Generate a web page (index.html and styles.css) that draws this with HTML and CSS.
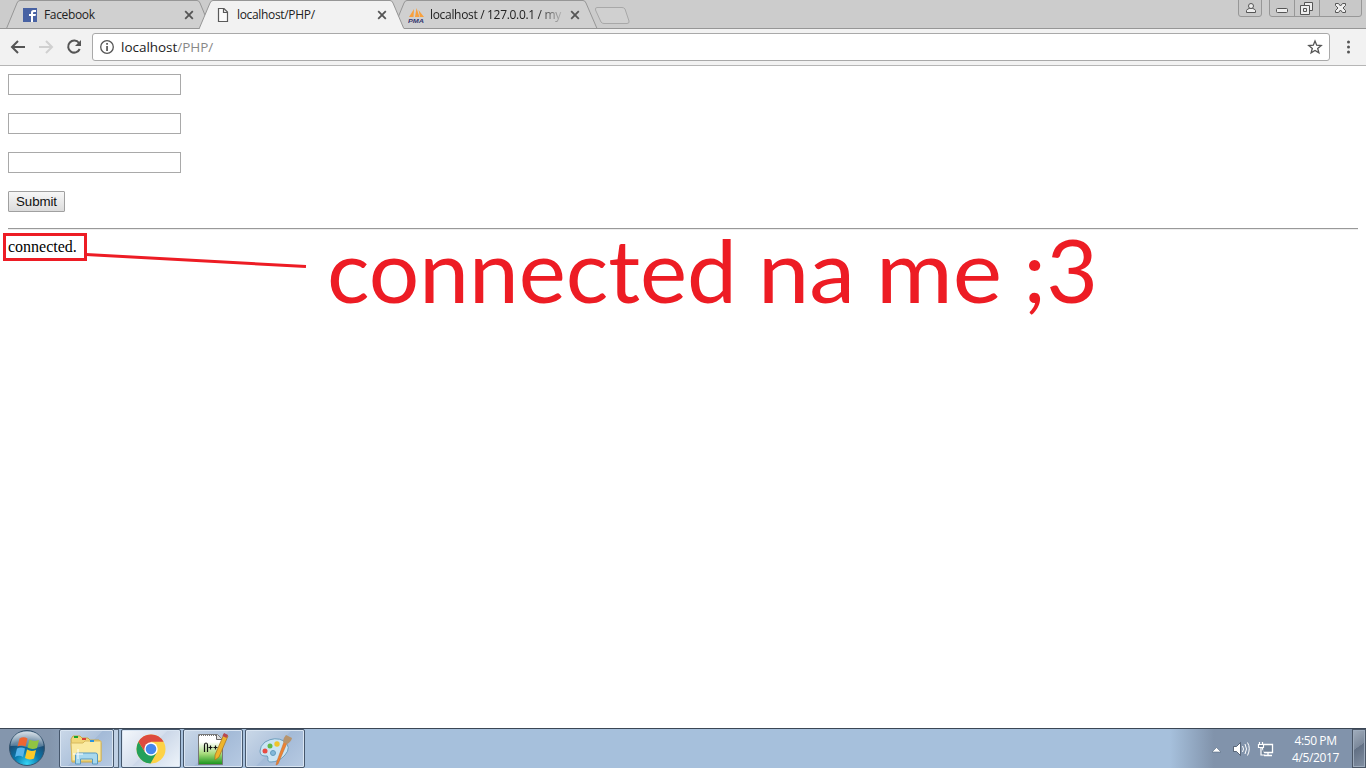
FILE: index.html
```html
<!DOCTYPE html>
<html lang="en">
<head>
<meta charset="utf-8">
<title>localhost/PHP/</title>
<link rel="stylesheet" href="styles.css">
</head>
<body>
<div class="desktop">
  <header class="tabstrip">
    <svg class="tab-shapes" width="1366" height="29" viewBox="0 0 1366 29">
      <g stroke="#969696" fill="#d0d0d0">
        <path d="M6.500 28.500L17 3Q18 .5 20 .5H197Q199 .5 200 3L210.500 28.500"/>
        <path d="M393.500 28.500L404 3Q405 .5 407 .5H583Q585 .5 586 3L597 28.500"/>
        <path d="M0 28.500H1366"/>
        <path d="M199 29L210 3Q211 .5 213 .5H390Q392 .5 393 3L404 29" fill="#f2f2f2"/>
        <path d="M597 7.500H622Q624 7.500 625 9L629 21Q629.500 23.500 627 23.500H604Q602 23.500 601 22L595.500 10Q595 7.500 597 7.500Z" stroke="#a8a8a8"/>
      </g>
      <path d="M200 28.500H403.500" stroke="#f2f2f2"/>
    </svg>
    <div class="tab tab-first">
      <svg class="favicon" width="16" height="16" viewBox="0 0 16 16"><path d="M1 1h14v14H1z" fill="#4862a3"/><path d="M9 15V9H7V7h2V5.500Q9 3 11.500 3H14v2h-2q-1 0-1 1v1h3l-.5 2H11v6z" fill="#fff"/></svg>
      <span class="tab-title title-a">Facebook</span>
      <svg class="close" width="10" height="10" viewBox="0 0 10 10"><path d="M1.200 1.200l7.600 7.600M8.800 1.200L1.200 8.800"/></svg>
    </div>
    <div class="tab tab-second">
      <svg class="favicon" width="16" height="16" viewBox="0 0 16 16"><path d="M2.500 1.500H8L11.500 5v9.500h-9zM7.500 1.500v4h4" fill="#fafafa" stroke="#5a5a5a" stroke-width="1.200"/></svg>
      <span class="tab-title title-b">localhost/PHP/</span>
      <svg class="close" width="10" height="10" viewBox="0 0 10 10"><path d="M1.200 1.200l7.600 7.600M8.800 1.200L1.200 8.800"/></svg>
    </div>
    <div class="tab tab-third">
      <svg class="favicon" width="16" height="16" viewBox="0 0 16 16"><path d="M1 10L6 2l-.5 8zM7 10L8.500 1l3 9zM12 10l-1.500-7L16 10z" fill="#f8a03c"/><text x="0" y="15.500" class="pma" textLength="16" lengthAdjust="spacingAndGlyphs">PMA</text></svg>
      <span class="tab-title title-c">localhost / 127.0.0.1 / my</span>
      <svg class="close" width="10" height="10" viewBox="0 0 10 10"><path d="M1.200 1.200l7.600 7.600M8.800 1.200L1.200 8.800"/></svg>
    </div>
    <svg class="window-buttons" width="130" height="18" viewBox="0 0 130 18">
      <g fill="#c8c8c8" stroke="#979797">
        <path d="M2.500 0V14Q2.500 16.500 5 16.500H23Q25.500 16.500 25.500 14V0"/>
        <path d="M33.500 0V14Q33.500 16.500 36 16.500H123Q125.500 16.500 125.500 14V0M58.500 0V16M83.500 0V16"/>
      </g>
      <g fill="#eee" stroke="#555" stroke-width="1">
        <path d="M10.500 12.500v-2q1-2 3-2h3q2 0 3 2v2z"/><circle cx="15" cy="6" r="2.500"/>
        <rect x="40.500" y="8.500" width="11" height="4" rx="1"/>
        <path d="M68.500 2.500h8v8h-8z"/><path d="M64.500 5.500h9v9h-9zM67.500 8.500h3v3h-3z"/>
        <path d="M99.500 3.500h3l2 2.500 2-2.500h3v2L107 8l2.500 2.500v2h-3l-2-2.500-2 2.500h-3v-2L102 8l-2.500-2.500z"/>
      </g>
    </svg>
  </header>

  <nav class="toolbar">
    <svg width="92" height="36" viewBox="0 0 92 36" fill="none" stroke-width="2">
      <path d="M25 18H12M18 12l-6 6 6 6" stroke="#555"/>
      <path d="M39 18H52M46 12l6 6-6 6" stroke="#d0d0d0"/>
      <path d="M79 14A6 6 0 1 0 79.700 20" stroke="#555"/><path d="M81 11v6h-6z" fill="#555"/>
    </svg>
    <div class="omnibox">
      <svg width="28" height="26" viewBox="0 0 28 26"><circle cx="14" cy="13" r="6.300" fill="none" stroke="#555" stroke-width="1.300"/><path d="M13.200 9h1.700v1.700h-1.700zM13.200 12h1.700v5h-1.700z" fill="#555"/></svg>
      <span class="url">localhost<span class="path">/PHP/</span></span>
      <svg class="star" width="16" height="16" viewBox="0 0 16 16"><path d="M8 2l1.700 4.200 4.500.3-3.500 2.900 1.200 4.400L8 11.400l-3.900 2.400 1.200-4.400-3.500-2.900 4.500-.3z" fill="none" stroke="#555" stroke-width="1.300"/></svg>
    </div>
    <svg width="36" height="36" viewBox="0 0 36 36" fill="#555"><circle cx="18.500" cy="13" r="1.500"/><circle cx="18.500" cy="18" r="1.500"/><circle cx="18.500" cy="23" r="1.500"/></svg>
  </nav>

  <main class="page">
    <form class="form">
      <input class="field" type="text" aria-label="Field one">
      <input class="field" type="text" aria-label="Field two">
      <input class="field" type="text" aria-label="Field three">
      <button class="submit" type="button">Submit</button>
    </form>
    <hr class="rule">
    <div class="status">connected.</div>
    <svg class="annotation" width="1110" height="150" viewBox="0 200 1110 150">
      <path d="M4.500 234.500h81v25h-81z" fill="none" stroke="#ed1c24" stroke-width="3"/>
      <path d="M86 254.500L306 266.500" fill="none" stroke="#ed1c24" stroke-width="3"/>
      <g class="note">
        <text x="327" y="303" textLength="410" lengthAdjust="spacingAndGlyphs">connected</text>
        <text x="758" y="303" textLength="97" lengthAdjust="spacingAndGlyphs">na</text>
        <text x="876" y="303" textLength="126" lengthAdjust="spacingAndGlyphs">me</text>
        <text x="1023" y="303" textLength="75" lengthAdjust="spacingAndGlyphs">;3</text>
      </g>
    </svg>
  </main>

  <footer class="taskbar">
    <svg class="start" width="58" height="40" viewBox="0 0 58 40">
      <defs>
        <radialGradient id="orb" cx=".5" cy=".95" r=".9"><stop offset="0" stop-color="#35d5f5"/><stop offset=".4" stop-color="#0879ad"/><stop offset=".75" stop-color="#1c4c74"/><stop offset="1" stop-color="#6d8da8"/></radialGradient>
        <linearGradient id="gloss" x2="0" y2="1"><stop stop-color="#fff" stop-opacity=".7"/><stop offset="1" stop-color="#fff" stop-opacity=".2"/></linearGradient>
      </defs>
      <circle cx="27" cy="20" r="17.500" fill="url(#orb)" stroke="#35546e"/>
      <path d="M10.500 18Q12 3.500 27 3.500T43.500 18Q35 21 27 19T10.500 18z" fill="url(#gloss)"/>
      <path d="M19.500 10.500q4-2.500 8 0l-2 8q-4-2-8 0z" fill="#ee6632"/>
      <path d="M29.500 11.500q4 2.500 9.500.5l-2 8q-5 2-9.500-.5z" fill="#91c442"/>
      <path d="M17 20.500q4-2 8 0l-2 8.500q-4-2.500-8 0z" fill="#58b5eb"/>
      <path d="M27 21.500q4 2.500 9 .5l-2 8.500q-5 2-9-.5z" fill="#fbc929"/>
    </svg>
    <div class="task explorer">
      <svg width="54" height="38" viewBox="0 0 54 38">
        <path d="M11 9l2-3h7l2 2h6l2 2h9l2 3v18l-4 1H12z" fill="#f1d779" stroke="#c9a84b"/>
        <path d="M11 13h12l2-2h16v20H12z" fill="#faeaa2" stroke="#d7b95f"/>
        <path d="M14 6h4v2h-4z" fill="#19a32c"/><path d="M22 8h4v2h-4z" fill="#d9423a"/><path d="M30 10h4v2h-4z" fill="#2b93dc"/>
        <path d="M15.500 34V25q0-2 2-2h18q2 0 2 2v9h-5v-5h-12v5z" fill="#a7d8ee" stroke="#5798c0"/>
        <path d="M18 19v10M13 24h10" stroke="#fff"/>
      </svg>
    </div>
    <div class="task-stack"></div>
    <div class="task active">
      <svg width="58" height="38" viewBox="0 0 58 38">
        <circle cx="29" cy="19" r="14.500" fill="#fdd246"/>
        <path d="M16.440 11.750A14.500 14.500 0 0 0 28.500 33.500L34.500 23 29 19 23 22z" fill="#23a05a"/>
        <path d="M16.440 11.750A14.500 14.500 0 0 1 41.560 11.750H29L23 22z" fill="#dd4b3e"/>
        <circle cx="29" cy="19" r="6.700" fill="#fff"/><circle cx="29" cy="19" r="5.300" fill="#4587ed"/>
      </svg>
    </div>
    <div class="task">
      <svg width="58" height="38" viewBox="0 0 58 38">
        <defs><linearGradient id="sheet" x2="0" y2="1"><stop offset=".25" stop-color="#fff"/><stop offset=".65" stop-color="#a4da78"/><stop offset="1" stop-color="#15921b"/></linearGradient></defs>
        <path d="M14.500 4.500h19l5 5v25h-24z" fill="url(#sheet)" stroke="#777"/><path d="M32.500 4.500v5h6" fill="#ddd" stroke="#666"/>
        <path d="M15 5.500h17" stroke="#777" stroke-dasharray="1 1"/>
        <path d="M20.500 22v-7q0-2 1.500-2t1.500 2v7M24.500 17.500h4M26.500 15.500v4M29.500 17.500h4M31.500 15.500v4" fill="none" stroke="#111" stroke-width="1.200"/>
        <path d="M40 4l4 2-9 21-4 3 0-5z" fill="#edb52c" stroke="#a7701b" stroke-width=".7"/><path d="M40 3l4 2-1.500 3-4-2z" fill="#b84750"/>
      </svg>
    </div>
    <div class="task">
      <svg width="58" height="38" viewBox="0 0 58 38">
        <path d="M19 12Q29 6 38 11q8 6 1 14-6 7-14 7-4 0-3-4 0-3-3-2-5 0-5-5 0-5 5-9z" fill="#cbe5f3" stroke="#6f9fbd"/>
        <circle cx="19" cy="21" r="2.500" fill="#e94c42"/><circle cx="24" cy="16" r="2.500" fill="#63b947"/><circle cx="31" cy="14" r="2.700" fill="#efc52a"/><circle cx="27" cy="23" r="2.500" fill="#83b9da" stroke="#639dbe"/>
        <path d="M38 12l3 1-9 21-2 1 1-4z" fill="#ed8333" stroke="#bc682d" stroke-width=".5"/><path d="M37 12q0-4 3-7l6 3q-1 4-5 6z" fill="#b8946c"/>
      </svg>
    </div>
    <div class="tray">
      <svg width="70" height="40" viewBox="0 0 70 40">
        <path d="M8 24l4.500-4.500L17 24z" fill="#fff" stroke="#566980" stroke-width=".6"/>
        <path d="M29.500 18.500h3l4-4v13l-4-4h-3z" fill="#fff" stroke="#3f4d60" stroke-width=".8"/><path d="M38.500 18q2 3 0 6M41 16q3 5 0 10M43.500 14.500q3.500 6 0 13" fill="none" stroke="#fff"/>
        <path d="M58.500 16.500h10v8h-10zM60 27.500h8M64 25v3" stroke="#fff" fill="#718399" stroke-width="1.300"/><path d="M54.500 16.500h5v3h-5zM55.500 14v3M58.500 14v3M57 19v8h4" stroke="#fff" fill="#718399" stroke-width="1.200"/>
      </svg>
      <div class="clock"><span class="time">4:50 PM</span><span class="date">4/5/2017</span></div>
      <div class="show-desktop"></div>
    </div>
  </footer>
</div>
</body>
</html>
```
FILE: styles.css
```css
* { box-sizing: border-box; }
body { margin: 0; background: #fff; overflow: hidden; font-family: "Open Sans", "Noto Sans", sans-serif; }
svg { display: block; flex: none; }
.desktop { width: 1366px; height: 768px; display: flex; flex-direction: column; }
.tabstrip { position: relative; height: 29px; background: #ccc; display: flex; flex: none; }
.tab-shapes { position: absolute; inset: 0; }
.tab { position: relative; display: flex; align-items: center; height: 29px; }
.tab-first { width: 194px; margin-left: 22px; }
.tab-second { width: 192px; }
.tab-third { width: 180px; }
.tab .favicon { margin-right: 5px; }
.tab-title { font-size: 12px; line-height: 18px; white-space: nowrap; color: #222; flex: none; }
.title-a { width: 141px; margin-left: 1px; letter-spacing: -.35px; }
.title-b { width: 141px; letter-spacing: -.33px; }
.title-c { width: 135px; letter-spacing: -.32px; margin-left: 1px; mask-image: linear-gradient(90deg, #000 108px, transparent 136px); }
.close { margin-left: -1px; stroke: #555; stroke-width: 1.8; }
.title-c + .close { margin-left: 5px; }
.pma { font: italic bold 6px "Liberation Sans", sans-serif; fill: #35366f; }
.window-buttons { position: absolute; top: 0; right: 0; width: 130px; }
.toolbar { height: 37px; flex: none; background: #f2f2f2; border-bottom: 1px solid #b6b6b6; display: flex; }
.omnibox { height: 28px; margin-top: 4px; width: 1238px; border: 1px solid #a9a9a9; border-radius: 3px; background: #fff; display: flex; align-items: center; }
.url { font-size: 13.5px; line-height: 20px; letter-spacing: -.03px; color: #222; }
.path { color: #888; }
.star { margin-left: auto; margin-right: 6px; }
.page { position: relative; flex: 1; padding: 8px; background: #fff; }
.form { display: flex; flex-direction: column; align-items: flex-start; gap: 18px; }
.field { width: 173px; height: 21px; border: 1px solid #a9a9a9; padding: 0; margin: 0; }
.submit { width: 57px; height: 21px; border: 1px solid #a0a0a0; border-radius: 1px; padding: 0; background: linear-gradient(#f7f7f7, #dcdcdc); font: 13.33px "Liberation Sans", Arial, sans-serif; letter-spacing: -.1px; color: #111; }
.rule { height: 2px; margin: 16px 0 8px; border: 0; border-top: 1px solid #999; border-bottom: 1px solid #eee; }
.status { font: 16px/18px "Liberation Serif", "Times New Roman", serif; color: #000; }
.annotation { position: absolute; top: 134px; left: 0; }
.note { font: 88px Lato, sans-serif; fill: #ed1c24; }
.taskbar { height: 40px; flex: none; display: flex; background: linear-gradient(90deg, #8496ad 0, #8496ad 50px, #a6c0dc 125px, #a6c0dc 1170px, #8193ab 1214px); border-top: 1px solid #3b4654; }
.start { margin-top: -1px; }
.task { width: 60px; height: 39px; margin-left: 2px; border: 1px solid #46576c; border-radius: 2px; box-shadow: inset 0 0 0 1px #d9e5f2; background: linear-gradient(135deg, #cad8e8, #afc3dc 48%, #a3bad7 49%, #b7cae2); }
.explorer { width: 55px; margin-left: 1px; }
.task-stack { width: 5px; border: 1px solid #536579; border-left: 0; background: #bfd0e4; }
.active { background: linear-gradient(135deg, #f5f8fc, #d5dfed 48%, #cbd7e8 49%, #eef4fa); }
.tray { display: flex; width: 162px; margin-left: auto; }
.tray > svg { margin-top: -1px; }
.clock { width: 77px; display: flex; flex-direction: column; align-items: center; padding: 3px 0 0 6px; margin-right: 1px; color: #fff; font-size: 12px; line-height: 17px; letter-spacing: -.4px; }
.time, .date { display: block; white-space: nowrap; }
.show-desktop { width: 14px; height: 39px; border: 1px solid #4a5666; box-shadow: inset 0 0 0 1px #9eacbd; background: linear-gradient(145deg, #a1adbc, #7c899b 45%, #627084 46%, #8290a3); }
```
